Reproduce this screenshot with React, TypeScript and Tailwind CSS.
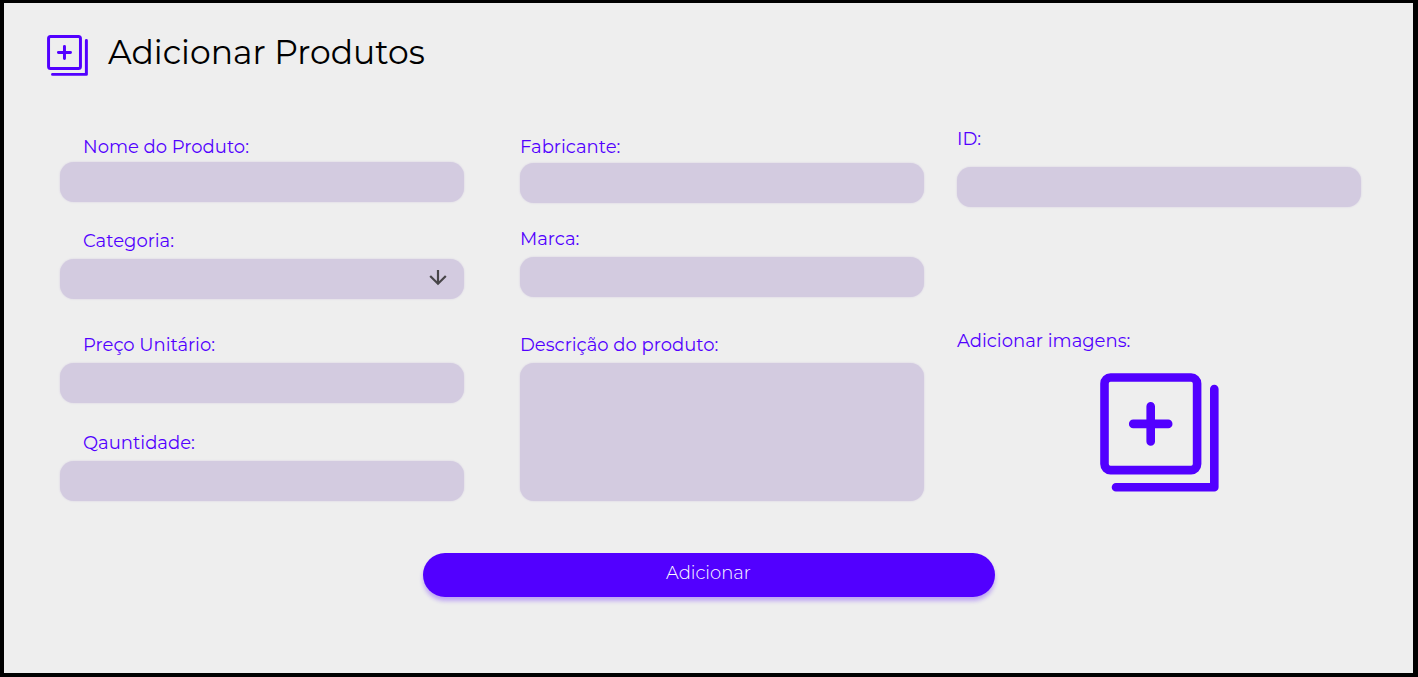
import type { ReactNode } from "react";
import { clsx } from "clsx";

const control =
  "block w-full rounded-[14px] border-0 bg-[#d3cbe0] px-6 text-lg text-[#2b2b2b] shadow-[0_0_2px_#d3cbe0] outline-none focus:ring-2 focus:ring-[#5200ff]";

function AddIcon({ className }: { className?: string }) {
  return (
    <svg
      viewBox="0 0 119 119"
      fill="none"
      stroke="currentColor"
      strokeWidth="8.6"
      strokeLinecap="round"
      strokeLinejoin="round"
      className={className}
      aria-hidden="true"
    >
      <rect x="4.5" y="4.5" width="92.6" height="92.6" rx="6" />
      <path d="M50.7 33.4V68.4M33.2 50.9H68.2" />
      <path d="M114.3 16V114.3H16" />
    </svg>
  );
}

type FieldProps = {
  id: string;
  label: string;
  indent?: boolean;
  className?: string;
  children: ReactNode;
};

function Field({ id, label, indent, className, children }: FieldProps) {
  return (
    <div className={clsx("flex flex-col", className)}>
      <label htmlFor={id} className={clsx("text-lg leading-6", indent && "pl-[23px]")}>
        {label}
      </label>
      {children}
    </div>
  );
}

function TextField({ id, label, indent, className = "gap-1.5" }: Omit<FieldProps, "children">) {
  return (
    <Field id={id} label={label} indent={indent} className={className}>
      <input id={id} type="text" className={clsx(control, "h-10")} />
    </Field>
  );
}

export default function App() {
  return (
    <main className="min-h-screen border-4 border-t-3 border-r-5 border-black bg-[#eeeeee] font-['Montserrat','Inter',sans-serif]">
      <header className="flex items-center gap-5 pt-[29px] pl-[43px]">
        <AddIcon className="size-[41px] text-[#5200ff]" />
        <h1 className="pb-1.5 text-[33px] leading-10 text-black">Adicionar Produtos</h1>
      </header>

      <form onSubmit={(event) => event.preventDefault()} className="pb-10">
        <div className="flex items-start pt-[49px] pr-[52px] pl-14 text-[#5200ff]">
          <div className="mt-2 flex min-w-0 flex-1 flex-col">
            <TextField id="nome" label="Nome do Produto:" indent className="gap-[3px]" />
            <Field id="categoria" label="Categoria:" indent className="mt-[27px] gap-1.5">
              <div className="relative">
                <select id="categoria" className={clsx(control, "h-10 appearance-none")}>
                  <option value=""></option>
                </select>
                <svg
                  viewBox="0 0 18 18"
                  fill="none"
                  stroke="#484649"
                  strokeWidth="2.2"
                  className="pointer-events-none absolute top-2.5 right-[17px] size-[18px]"
                  aria-hidden="true"
                >
                  <path d="M9 1V15M1.2 7L9 14.8L16.8 7" />
                </svg>
              </div>
            </Field>
            <TextField id="preco" label="Preço Unitário:" indent className="mt-[34px] gap-1.5" />
            <TextField id="quantidade" label="Qauntidade:" indent className="mt-7 gap-1.5" />
          </div>

          <div className="mt-2 ml-14 flex min-w-0 flex-1 flex-col">
            <TextField id="fabricante" label="Fabricante:" className="gap-1" />
            <TextField id="marca" label="Marca:" className="mt-6 gap-1.5" />
            <Field id="descricao" label="Descrição do produto:" className="mt-9 gap-1.5">
              <textarea id="descricao" className={clsx(control, "h-[138px] resize-none py-3")} />
            </Field>
          </div>

          <div className="ml-[33px] flex min-w-0 flex-1 flex-col">
            <TextField id="codigo" label="ID:" className="gap-4" />
            <div className="mt-[122px] flex flex-col gap-5">
              <span id="imagens" className="text-lg leading-6">
                Adicionar imagens:
              </span>
              <button type="button" aria-labelledby="imagens" className="cursor-pointer self-center">
                <AddIcon className="size-[119px]" />
              </button>
            </div>
          </div>
        </div>

        <button
          type="submit"
          className="mx-auto mt-[52px] block h-11 w-[572px] max-w-full cursor-pointer rounded-full bg-[#5200ff] pb-1 text-lg leading-6 font-light text-white shadow-[0_4px_4px_rgba(82,0,255,0.3)]"
        >
          Adicionar
        </button>
      </form>
    </main>
  );
}
